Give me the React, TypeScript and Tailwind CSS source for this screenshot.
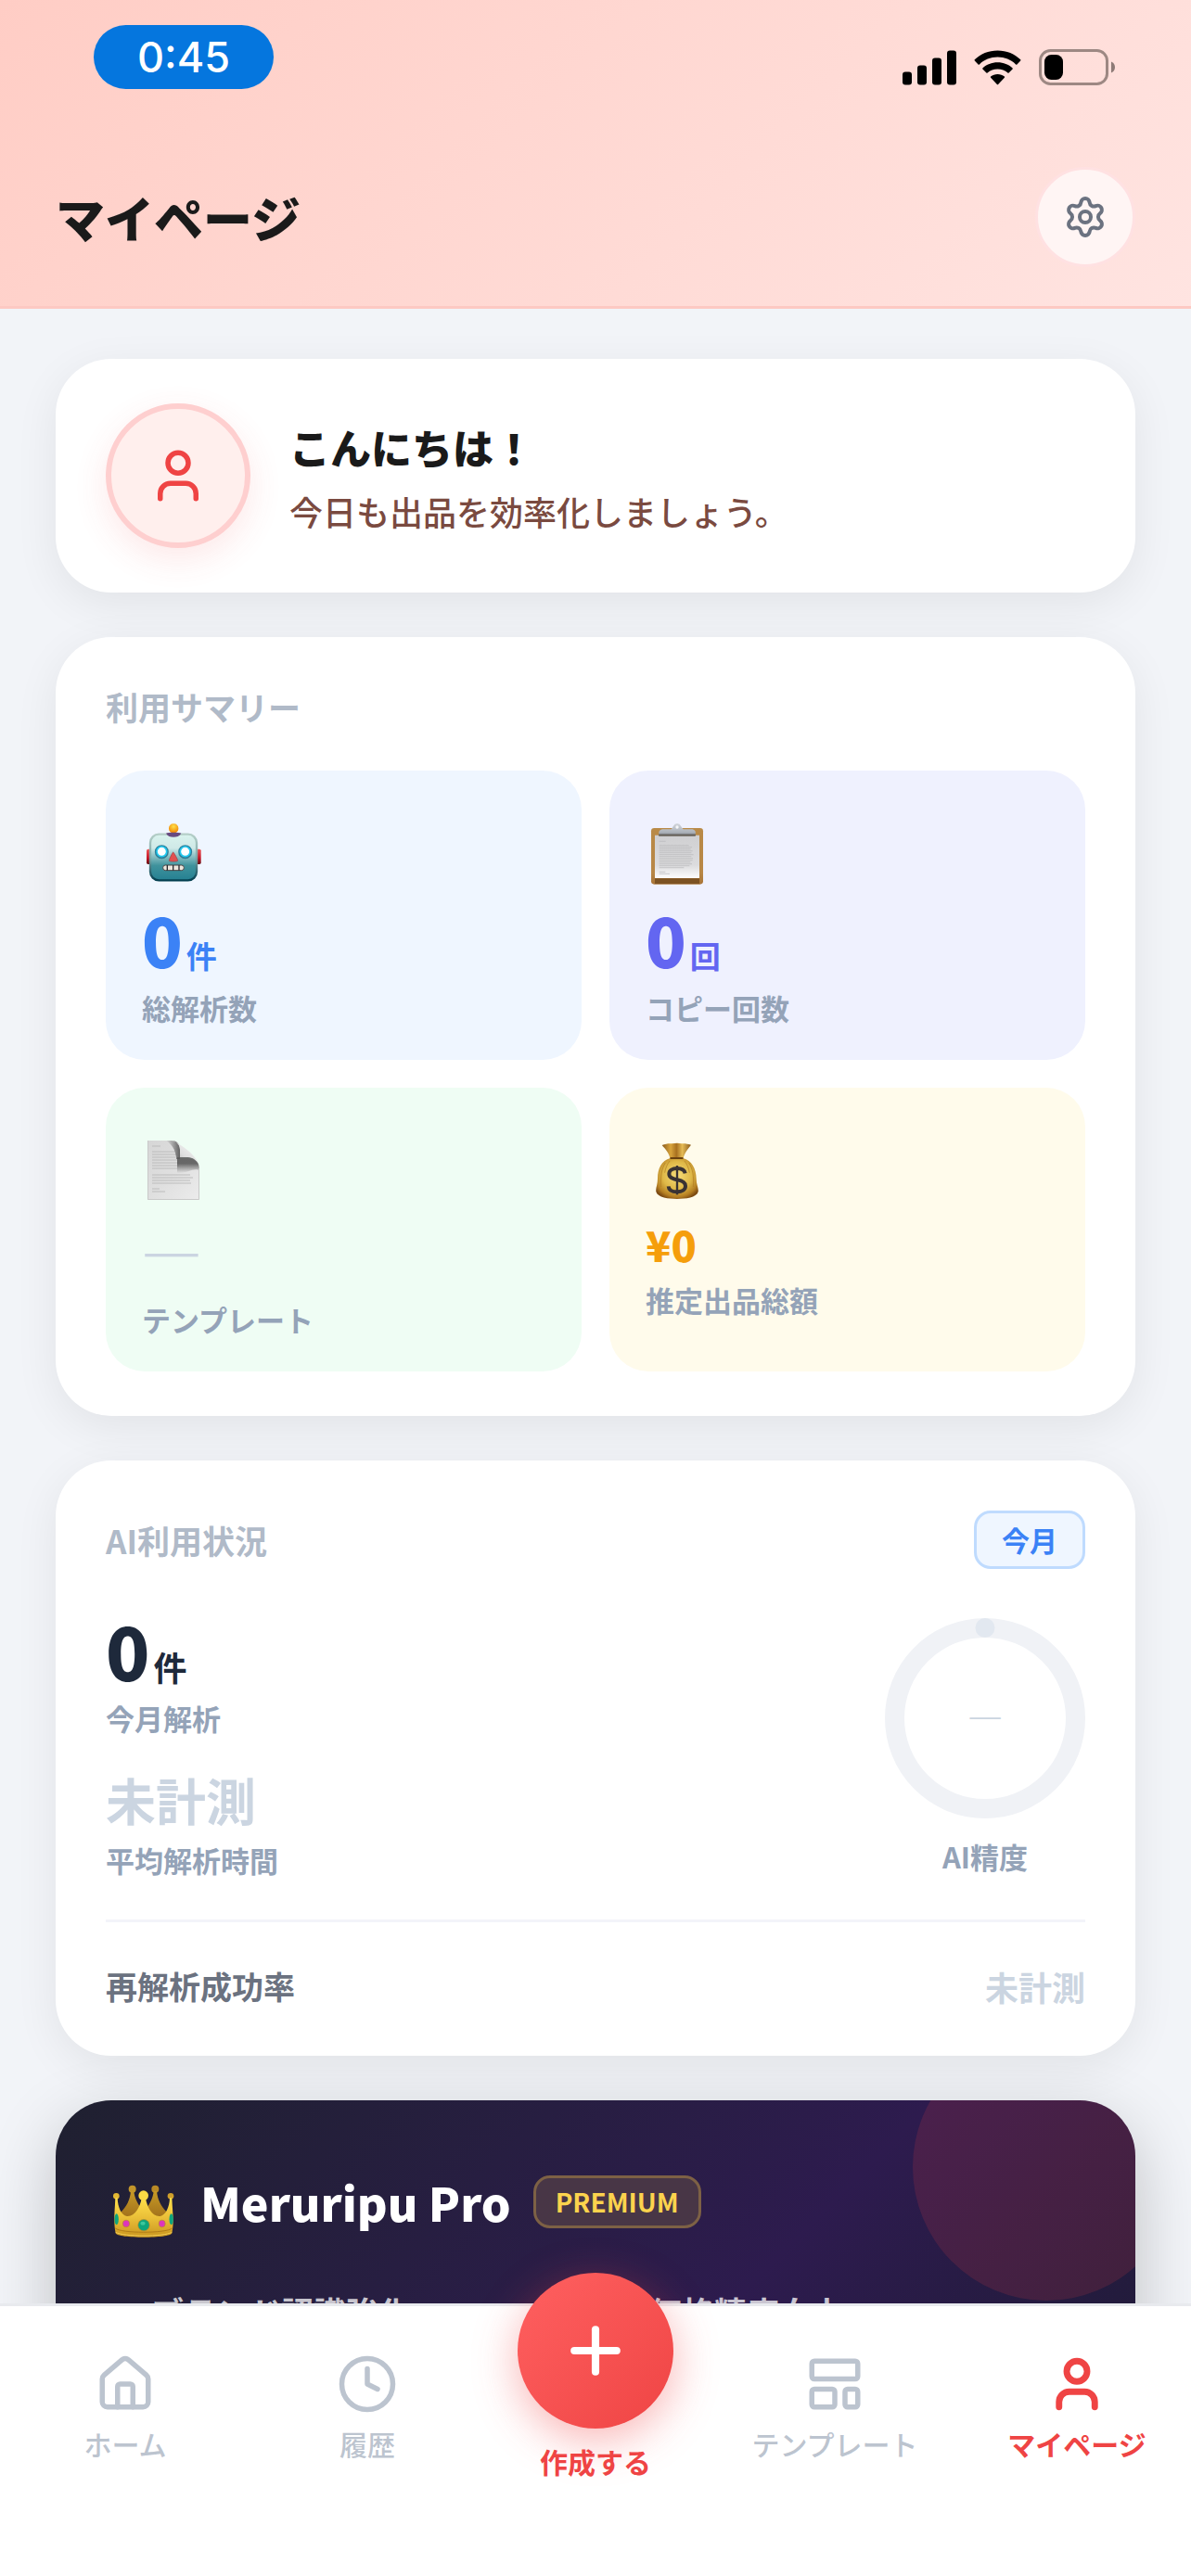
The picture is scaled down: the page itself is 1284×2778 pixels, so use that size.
import type { ReactNode } from 'react';
import { Clock, House, LayoutTemplate, Plus, Settings, User } from 'lucide-react';

function SignalIcon() {
  return (
    <svg width="58" height="38" viewBox="0 0 58 38" aria-hidden="true">
      <rect x="0" y="23.5" width="10" height="14" rx="3" />
      <rect x="16" y="16.5" width="10" height="21" rx="3" />
      <rect x="32" y="8.5" width="10" height="29" rx="3" />
      <rect x="48" y="0.5" width="10" height="37" rx="3" />
    </svg>
  );
}

function WifiIcon() {
  return (
    <svg width="51" height="38" viewBox="0 0 51 38" aria-hidden="true">
      <path d="M25.5 0.5C35.3 0.5 44 4.2 50.2 10.3C50.6 10.7 50.6 11.1 50.2 11.5L46.4 15.4C46 15.8 45.5 15.8 45.1 15.4C40 10.6 33.1 7.6 25.5 7.6S11 10.6 5.9 15.4C5.5 15.8 5 15.8 4.6 15.4L0.8 11.5C0.4 11.1 0.4 10.7 0.8 10.3C7 4.2 15.7 0.5 25.5 0.5Z" />
      <path d="M25.5 13.2C31.8 13.2 37.5 15.5 41.6 19.4C42 19.8 42 20.2 41.6 20.6L37.6 24.5C37.2 24.9 36.8 24.9 36.4 24.5C33.5 22 29.7 20.5 25.5 20.5S17.5 22 14.6 24.5C14.2 24.9 13.8 24.9 13.4 24.5L9.4 20.6C9 20.2 9 19.8 9.4 19.4C13.5 15.5 19.2 13.2 25.5 13.2Z" />
      <path d="M25.5 26C28.3 26 30.9 27 32.9 28.6C33.3 29 33.3 29.4 32.9 29.8L26.1 37C25.7 37.4 25.3 37.4 24.9 37L18.1 29.8C17.7 29.4 17.7 29 18.1 28.6C20.1 27 22.7 26 25.5 26Z" />
    </svg>
  );
}

function BatteryIcon() {
  return (
    <svg width="82" height="39" viewBox="0 0 82 39" aria-hidden="true">
      <rect x="1.5" y="1.5" width="72" height="36" rx="11" fill="none" stroke="#9d8883" strokeWidth="3" />
      <rect x="6" y="6" width="20" height="27" rx="7.5" />
      <path d="M78 13.5C80.500 14.500 82 16.800 82 19.500S80.500 24.500 78 25.500Z" fill="#8d7a76" />
    </svg>
  );
}

function RobotEmoji() {
  return (
    <svg className="size-[66px]" viewBox="39 48 198 198" aria-hidden="true">
      <defs>
        <linearGradient id="robotFace" x1="0" y1="0" x2="0" y2="1">
          <stop offset="0" stopColor="#d9f3ee" />
          <stop offset="0.3" stopColor="#cfe9e7" />
          <stop offset="0.68" stopColor="#3f929c" />
          <stop offset="1" stopColor="#258092" />
        </linearGradient>
        <linearGradient id="robotEdge" x1="0" y1="0" x2="0" y2="1">
          <stop offset="0" stopColor="#b5cfc8" />
          <stop offset="0.5" stopColor="#7fa9a9" />
          <stop offset="1" stopColor="#023f50" />
        </linearGradient>
        <linearGradient id="robotEar" x1="0" y1="0" x2="0" y2="1">
          <stop offset="0" stopColor="#ee5656" />
          <stop offset="0.6" stopColor="#c41526" />
          <stop offset="1" stopColor="#5e0a10" />
        </linearGradient>
        <radialGradient id="robotBulb" cx="0.5" cy="0.3" r="0.7">
          <stop offset="0" stopColor="#ffe04a" />
          <stop offset="1" stopColor="#f08200" />
        </radialGradient>
      </defs>
      <rect x="54" y="137" width="16" height="49" rx="5" fill="url(#robotEar)" />
      <rect x="214" y="137" width="16" height="49" rx="5" fill="url(#robotEar)" />
      <rect x="126" y="55" width="31" height="30" rx="14" fill="url(#robotBulb)" />
      <rect x="66" y="89" width="150" height="149" rx="28" fill="url(#robotFace)" stroke="url(#robotEdge)" strokeWidth="7" />
      <path d="M117 86C124 82 159 82 166 86C160 95 152 98 141 98S123 95 117 86Z" fill="#674a80" />
      <circle cx="103" cy="146" r="18" fill="#fff" stroke="#2f7f99" strokeWidth="9" />
      <circle cx="103" cy="145" r="16" fill="#fff" stroke="#20c8ee" strokeWidth="5" />
      <circle cx="179" cy="146" r="18" fill="#fff" stroke="#2f7f99" strokeWidth="9" />
      <circle cx="179" cy="145" r="16" fill="#fff" stroke="#20c8ee" strokeWidth="5" />
      <path d="M140 147C142 147 156 172 155 175C154 178 128 178 127 175C126 172 138 147 140 147Z" fill="#e2504f" stroke="#9b3d44" strokeWidth="2" />
      <rect x="107" y="189" width="68" height="17" rx="8" fill="#ece6dd" stroke="#4a4546" strokeWidth="3" />
      <path d="M121 189V206M140 189V206M159 189V206" stroke="#2a2b30" strokeWidth="4" />
    </svg>
  );
}

function ClipboardEmoji() {
  return (
    <svg className="size-[66px] overflow-visible" viewBox="18 48 198 198" aria-hidden="true">
      <defs>
        <linearGradient id="boardWood" x1="0" y1="0" x2="0" y2="1">
          <stop offset="0" stopColor="#b98a47" />
          <stop offset="0.8" stopColor="#b88746" />
          <stop offset="1" stopColor="#a87336" />
        </linearGradient>
        <linearGradient id="boardPaper" x1="0" y1="0" x2="0" y2="1">
          <stop offset="0" stopColor="#cfcfd1" />
          <stop offset="0.7" stopColor="#dcdcde" />
          <stop offset="1" stopColor="#fdfdfd" />
        </linearGradient>
        <linearGradient id="boardClip" x1="0" y1="0" x2="0" y2="1">
          <stop offset="0" stopColor="#d2d6dc" />
          <stop offset="0.8" stopColor="#a9afb7" />
          <stop offset="1" stopColor="#6f7278" />
        </linearGradient>
      </defs>
      <rect x="36" y="69" width="168" height="182" rx="10" fill="url(#boardWood)" />
      <path d="M48 232H192V249H48Z" fill="#7c5222" />
      <path d="M48 92H192V231H48Z" fill="url(#boardPaper)" />
      <path
        d="M62 112H83M62 125H158M62 131H168M62 137H164M62 143H170M62 149H166M62 155H173M62 161H166M62 167H171M62 173H170M62 179H163M62 185H168M62 191H160M62 197H142M62 211H82M62 217H96"
        stroke="#b6b7ba"
        strokeWidth="2"
      />
      <path d="M62 92C58 80 64 73 76 73H96C104 73 104 68 108 62A13 13 0 0 1 132 62C136 68 138 73 144 73H166C177 73 183 80 178 92Z" fill="url(#boardClip)" />
      <rect x="60" y="89" width="120" height="6" rx="2" fill="#67625a" />
      <circle cx="120" cy="66" r="5" fill="#f5f6f8" />
    </svg>
  );
}

function PageEmoji() {
  return (
    <svg className="size-[66px]" viewBox="0 0 66 66" aria-hidden="true">
      <defs>
        <linearGradient id="pageSheet" x1="0" y1="0" x2="1" y2="1">
          <stop offset="0" stopColor="#d6d6d6" />
          <stop offset="0.5" stopColor="#dfdfdf" />
          <stop offset="1" stopColor="#ececec" />
        </linearGradient>
        <linearGradient id="pageFold" x1="0.2" y1="0.9" x2="0.9" y2="0.1">
          <stop offset="0" stopColor="#b5b5b5" />
          <stop offset="0.35" stopColor="#dedede" />
          <stop offset="1" stopColor="#f7f7f7" />
        </linearGradient>
        <linearGradient id="pageShadeLeft" x1="0" y1="0" x2="1" y2="0">
          <stop offset="0" stopColor="#5a5a5a" stopOpacity="0" />
          <stop offset="1" stopColor="#4a4a4a" stopOpacity="0.85" />
        </linearGradient>
        <linearGradient id="pageShadeBottom" x1="0" y1="1" x2="0" y2="0">
          <stop offset="0" stopColor="#5a5a5a" stopOpacity="0" />
          <stop offset="0.6" stopColor="#4a4a4a" stopOpacity="0.8" />
          <stop offset="1" stopColor="#5a5a5a" stopOpacity="0.9" />
        </linearGradient>
      </defs>
      <path d="M6 2H32C37 2 41 5 41 12V22H53C58 23 62 26 62 32V66H6Z" fill="url(#pageSheet)" />
      <path
        d="M11 8H20M11 14H36M11 17H38M11 20H36M11 23H38M11 26H39M11 29H40M11 32H38M11 39H52M11 42H55M11 45H52M11 48H53M11 54H19M11 57H25"
        stroke="#bcbcbc"
        strokeWidth="1"
      />
      <path d="M26 2H32C37 2 41 5 41 12V22H37C37 15 34 7 26 2Z" fill="url(#pageShadeLeft)" />
      <path d="M38 20H53C58 21 62 26 62 34C56 31 47 38 38 37Z" fill="url(#pageShadeBottom)" />
      <path d="M31 2C40 4 57 16 61 27C57 21 53 20 48 20H41V12C41 6 37 3 31 2Z" fill="url(#pageFold)" />
      <path d="M6.500 2V65.500H61.500V32" fill="none" stroke="#c9c9c9" strokeWidth="1" />
    </svg>
  );
}

function MoneyBagEmoji() {
  return (
    <svg className="size-[66px]" viewBox="18 1074 198 198" aria-hidden="true">
      <defs>
        <radialGradient id="bagBody" cx="0.5" cy="0.42" r="0.62">
          <stop offset="0" stopColor="#f6dc78" />
          <stop offset="0.55" stopColor="#dfb847" />
          <stop offset="0.85" stopColor="#b57f22" />
          <stop offset="1" stopColor="#7d4b12" />
        </radialGradient>
        <linearGradient id="bagTop" x1="0" y1="0" x2="1" y2="0">
          <stop offset="0" stopColor="#8a5a1c" />
          <stop offset="0.3" stopColor="#d9a53c" />
          <stop offset="0.5" stopColor="#a8701f" />
          <stop offset="0.7" stopColor="#e5bb55" />
          <stop offset="1" stopColor="#8a5a1c" />
        </linearGradient>
      </defs>
      <path d="M71 1095C82 1091 92 1089 103 1090C113 1088 124 1087 134 1090C145 1089 155 1091 165 1094C154 1108 143 1121 139 1140H98C94 1121 83 1108 71 1095Z" fill="url(#bagTop)" />
      <path d="M98 1137H139C168 1145 181 1171 182 1203C182 1222 190 1234 188 1246C183 1265 147 1269 120 1269S57 1265 52 1246C50 1234 57 1222 57 1203C57 1171 69 1145 98 1137Z" fill="url(#bagBody)" />
      <path d="M82 1152C70 1170 66 1195 68 1230M158 1152C170 1170 175 1195 172 1230M96 1146C88 1156 82 1170 80 1184M144 1146C152 1156 158 1170 160 1184" fill="none" stroke="#b07c22" strokeWidth="3" opacity="0.65" />
      <rect x="97" y="1134" width="43" height="6" rx="3" fill="#6b4210" />
      <path d="M146 1186C144 1175 134 1170 120 1170C104 1170 94 1177 94 1188C94 1200 105 1204 120 1207C136 1210 147 1214 147 1227C147 1239 136 1246 120 1246C104 1246 93 1240 92 1228" fill="none" stroke="#3a3333" strokeWidth="12" />
      <path d="M120 1161V1255" stroke="#3a3333" strokeWidth="7" />
    </svg>
  );
}

function CrownEmoji() {
  return (
    <svg className="size-[82px]" viewBox="12 -20 246 246" aria-hidden="true">
      <defs>
        <linearGradient id="crownFront" x1="0" y1="0" x2="0" y2="1">
          <stop offset="0" stopColor="#ffe04a" />
          <stop offset="0.5" stopColor="#eabf38" />
          <stop offset="1" stopColor="#c9951f" />
        </linearGradient>
        <linearGradient id="crownBack" x1="0" y1="0" x2="0" y2="1">
          <stop offset="0" stopColor="#c89a26" />
          <stop offset="1" stopColor="#9c6c1a" />
        </linearGradient>
      </defs>
      <circle cx="98" cy="63" r="12" fill="#c2952a" />
      <circle cx="172" cy="63" r="12" fill="#b98a26" />
      <path d="M93 70H103C105 92 116 115 135 135C154 115 165 92 167 70H177C179 95 190 120 212 140L205 165H62L58 140C80 122 91 96 93 70Z" fill="url(#crownBack)" />
      <circle cx="46" cy="86" r="10" fill="#e3b833" />
      <circle cx="222" cy="86" r="10" fill="#cf9f2b" />
      <path d="M43 92H50C51 122 62 148 80 151C106 154 123 120 128 94H141C146 120 162 154 188 151C206 148 218 122 219 92H226C227 120 230 146 230 166C230 182 228 196 226 206C222 224 48 224 44 206C41 190 40 180 40 166C39 146 42 120 43 92Z" fill="url(#crownFront)" />
      <circle cx="134" cy="84" r="16" fill="#fbda45" />
      <path d="M43 190C62 207 206 207 227 190" fill="none" stroke="#b07c18" strokeWidth="3" />
      <path d="M44 203C70 218 200 218 226 203" fill="none" stroke="#f0cc55" strokeWidth="3" />
      <circle cx="135" cy="180" r="18.500" fill="#0fa57c" stroke="#b8862a" strokeWidth="2" />
      <ellipse cx="132" cy="174" rx="8" ry="6" fill="#3cc79c" />
      <ellipse cx="78" cy="175" rx="11" ry="11.500" fill="#dd35bd" stroke="#b8862a" strokeWidth="2" />
      <ellipse cx="194" cy="175" rx="10.500" ry="11.500" fill="#dd35bd" stroke="#b8862a" strokeWidth="2" />
      <ellipse cx="47" cy="161" rx="6.500" ry="18" fill="#0fa57c" />
      <ellipse cx="224" cy="161" rx="6.500" ry="18" fill="#0fa57c" />
    </svg>
  );
}

const cardClass = 'rounded-[60px] bg-white px-[54px] shadow-[0_12px_48px_rgba(0,0,0,0.07)]';
const headingClass = 'text-[35px] leading-[54px] font-bold text-[#b0bac8]';
const labelClass = 'text-[31px] leading-[45px] font-bold text-[#94a3b8]';

function StatTile({ tone, icon, children, label }: { tone: string; icon: ReactNode; children: ReactNode; label: string }) {
  return (
    <div className={`rounded-[42px] px-[39px] pt-[55px] pb-[34px] ${tone}`}>
      {icon}
      <div className="mt-[22px] font-black">{children}</div>
      <p className={`mt-3 ${labelClass}`}>{label}</p>
    </div>
  );
}

function Tab({ icon, label, active = false }: { icon: ReactNode; label: string; active?: boolean }) {
  return (
    <a
      href="#"
      aria-current={active ? 'page' : undefined}
      className={`flex flex-col items-center gap-2.5 text-[30px] leading-[42px] whitespace-nowrap ${
        active ? 'font-bold text-[#ef4444]' : 'font-medium text-[#bcc4cf]'
      }`}
    >
      {icon}
      {label}
    </a>
  );
}

export default function App() {
  return (
    <div
      lang="ja"
      className="flex h-screen flex-col overflow-hidden bg-[#f2f4f8] font-['Noto_Sans_CJK_JP',sans-serif] text-[#1a1a1a]"
    >
      <header className="border-b-[3px] border-[#fdc9c3] bg-linear-135 from-[#ffcdc5] to-[#ffe4e1] pt-[27px] pb-[42px]">
        <div className="flex items-start justify-between pr-[82px] pl-[101px]">
          <time className="flex h-[69px] w-[194px] items-center justify-center rounded-full bg-[#0576de] font-['Inter',sans-serif] text-[45px] leading-none font-medium text-white">
            0:45
          </time>
          <div className="flex items-center gap-[19px] pt-[26px]">
            <SignalIcon />
            <WifiIcon />
            <BatteryIcon />
          </div>
        </div>
        <div className="mt-[84px] flex items-center justify-between px-[60px]">
          <h1 className="text-[53px] leading-[78px] font-black">マイページ</h1>
          <button
            type="button"
            aria-label="設定"
            className="flex size-[108px] items-center justify-center rounded-full border-[3px] border-[#ffe1e2] bg-[#fff5f4] text-[#6b7280]"
          >
            <Settings size={48} strokeWidth={2} />
          </button>
        </div>
      </header>

      <main className="flex min-h-0 flex-1 flex-col gap-12 overflow-hidden px-[60px] pt-[54px] *:shrink-0">
        <section className={`flex items-center gap-[42px] py-12 ${cardClass}`}>
          <div className="flex size-[156px] items-center justify-center rounded-full border-[6px] border-[#fecfcf] bg-[#ffefed] text-[#ef4444] shadow-[0_12px_36px_rgba(239,68,68,0.12)]">
            <User size={66} strokeWidth={2} />
          </div>
          <div className="pt-1">
            <h2 className="text-[44px] leading-[66px] font-black">こんにちは！</h2>
            <p className="mt-1.5 text-[36px] leading-[60px] font-medium text-[#7a4a40]">今日も出品を効率化しましょう。</p>
          </div>
        </section>

        <section className={`py-12 ${cardClass}`}>
          <h2 className={`mb-[42px] ${headingClass}`}>利用サマリー</h2>
          <div className="grid grid-cols-2 gap-[30px]">
            <StatTile tone="bg-[#eff6ff]" icon={<RobotEmoji />} label="総解析数">
              <p className="text-[72px] leading-[78px] text-[#3b82f6]">
                0<span className="ml-1 text-[33px] leading-none font-bold">件</span>
              </p>
            </StatTile>
            <StatTile tone="bg-[#eff1fe]" icon={<ClipboardEmoji />} label="コピー回数">
              <p className="text-[72px] leading-[78px] text-[#6366f1]">
                0<span className="ml-1 text-[33px] leading-none font-bold">回</span>
              </p>
            </StatTile>
            <StatTile tone="bg-[#effdf4]" icon={<PageEmoji />} label="テンプレート">
              <p className="pb-[18px] text-[72px] leading-[54px] font-light text-[#cbd5e1]">—</p>
            </StatTile>
            <StatTile tone="bg-[#fffbeb]" icon={<MoneyBagEmoji />} label="推定出品総額">
              <p className="text-[45px] leading-[51px] text-[#f59e0b]">¥0</p>
            </StatTile>
          </div>
        </section>

        <section className={`pt-[54px] pb-12 ${cardClass}`}>
          <div className="flex items-center justify-between">
            <h2 className={headingClass}>AI利用状況</h2>
            <span className="rounded-[18px] border-[3px] border-[#bfdbfe] bg-[#eff6ff] px-[27px] py-1.5 text-[30px] leading-[45px] font-bold text-[#3b82f6]">
              今月
            </span>
          </div>
          <div className="mt-[45px] flex items-start justify-between">
            <div>
              <p className="text-[78px] leading-[84px] font-black text-[#1e293b]">
                0<span className="ml-1 text-[36px] leading-none font-bold">件</span>
              </p>
              <p className={`mt-[9px] ${labelClass}`}>今月解析</p>
              <p className="mt-9 text-[54px] leading-[60px] font-bold text-[#cbd5e1]">未計測</p>
              <p className={`mt-3 ${labelClass}`}>平均解析時間</p>
            </div>
            <div className="flex flex-col items-center pt-2">
              <div className="grid size-[216px] place-items-center">
                <svg className="col-start-1 row-start-1 size-full" viewBox="0 0 216 216" aria-hidden="true">
                  <circle cx="108" cy="108" r="97.500" fill="none" stroke="#f0f2f6" strokeWidth="21" />
                  <circle cx="108" cy="10.500" r="10.500" fill="#e2e8f0" />
                </svg>
                <span className="col-start-1 row-start-1 pb-3 text-[42px] leading-[42px] font-light text-[#cbd5e1]">—</span>
              </div>
              <p className={`mt-[18px] ${labelClass}`}>AI精度</p>
            </div>
          </div>
          <div className="mt-[42px] flex justify-between border-t-[3px] border-[#f3f4f9] pt-[42px] leading-[54px] font-bold">
            <span className="text-[34px] text-[#6b7280]">再解析成功率</span>
            <span className="text-[36px] text-[#cbd5e1]">未計測</span>
          </div>
        </section>

        <section className="relative h-[560px] rounded-[60px] bg-linear-135 from-[#1f2030] via-[#2d1b4e] via-55% to-[#1a1a2e] px-[54px] pt-[68px] text-white shadow-[0_24px_72px_rgba(0,0,0,0.22)]">
          <div className="pointer-events-none absolute inset-0 overflow-hidden rounded-[60px]" aria-hidden="true">
            <div className="absolute -top-[72px] -right-12 size-72 rounded-full bg-[#ef4444]/15" />
          </div>
          <div className="relative flex items-center">
            <CrownEmoji />
            <h2 className="ml-5 text-[50px] leading-[78px] font-black">Meruripu Pro</h2>
            <span className="ml-6 rounded-[18px] border-[3px] border-[#7d6145] bg-[#483646] px-[21px] py-1.5 text-[28px] leading-[39px] font-bold text-[#fcd34d]">
              PREMIUM
            </span>
          </div>
          <ul className="relative mt-[54px] grid grid-cols-2 gap-x-[18px] text-[35px] leading-12 font-bold text-white/75">
            <li className="pl-[49px]">ブランド認識強化</li>
            <li className="pl-[49px]">価格精度向上</li>
          </ul>
        </section>
      </main>

      <nav
        aria-label="メイン"
        className="relative z-10 grid grid-cols-[258fr_264fr_228fr_288fr_234fr] items-start border-t-[3px] border-[#e8eaee] bg-white px-1.5 pt-[51px] pb-[103px]"
      >
        <Tab icon={<House size={66} strokeWidth={2} />} label="ホーム" />
        <Tab icon={<Clock size={66} strokeWidth={2} />} label="履歴" />
        <button
          type="button"
          className="-mt-[87px] flex flex-col items-center gap-3.5 text-[30px] leading-[42px] font-bold whitespace-nowrap text-[#ef4444]"
        >
          <span className="flex size-[168px] items-center justify-center rounded-full bg-linear-135 from-[#ff6060] to-[#ef4444] text-white shadow-[0_12px_48px_rgba(239,68,68,0.4)]">
            <Plus size={78} strokeWidth={2.5} />
          </span>
          作成する
        </button>
        <Tab icon={<LayoutTemplate size={66} strokeWidth={2} />} label="テンプレート" />
        <Tab icon={<User size={66} strokeWidth={2.5} />} label="マイページ" active />
      </nav>
    </div>
  );
}
